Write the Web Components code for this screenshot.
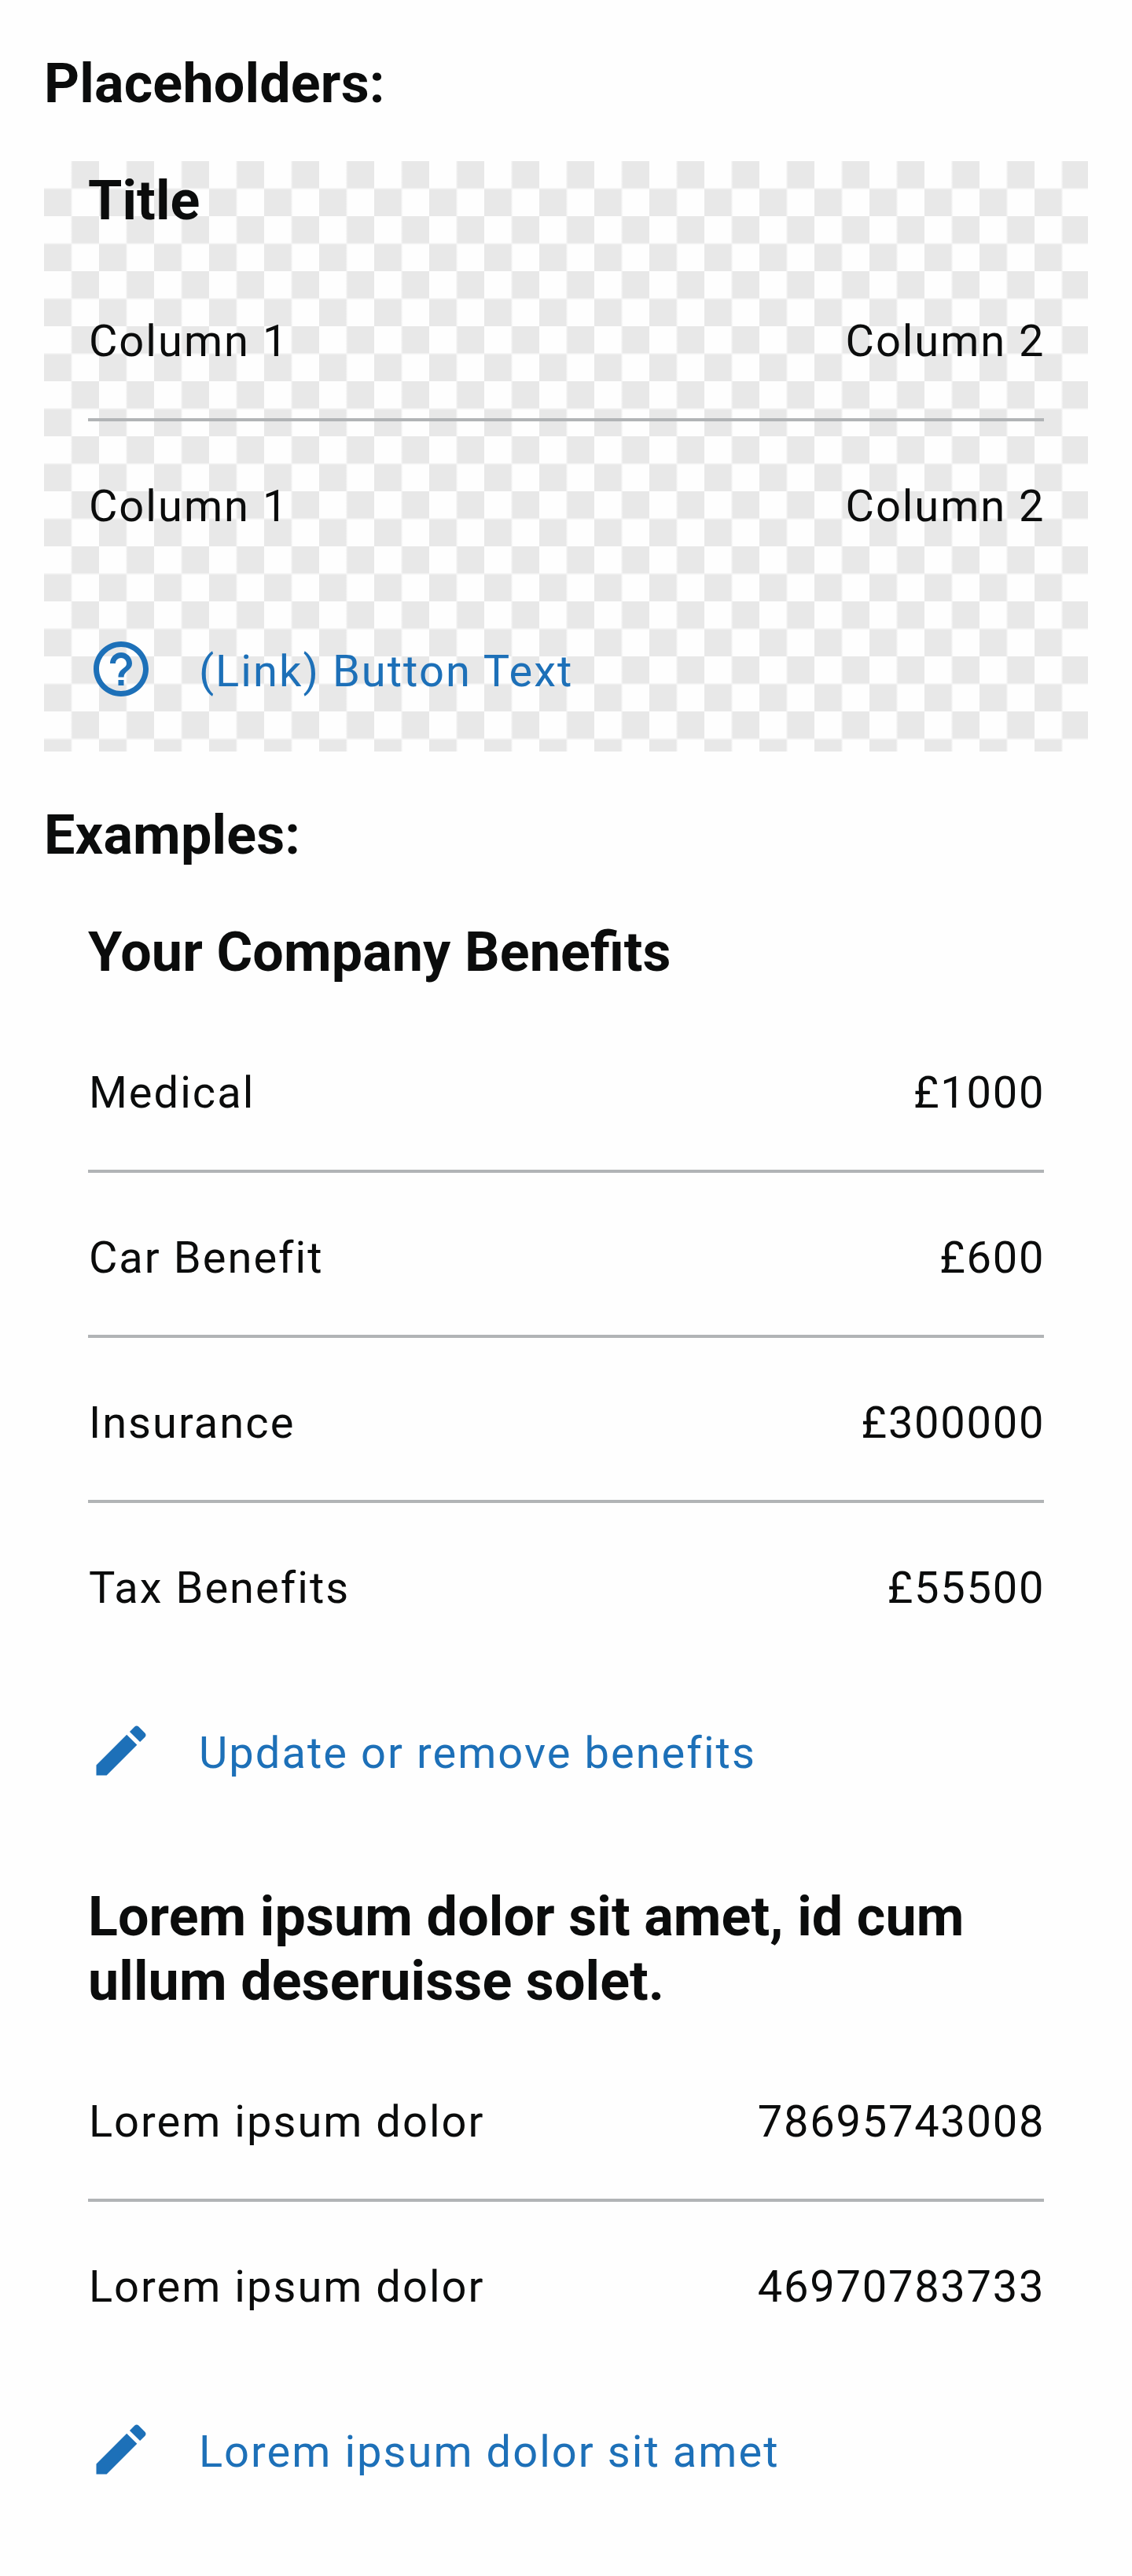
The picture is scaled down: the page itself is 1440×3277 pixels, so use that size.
<!DOCTYPE html>
<html lang="en">
<head>
<meta charset="utf-8">
<title>Benefit lists</title>
<style>
body { margin: 0; background: #fefefe; color: #0b0c0c; font-family: Roboto, "Liberation Sans", sans-serif; }
</style>
</head>
<body>
<spec-page>
  <section-heading>Placeholders:</section-heading>
  <summary-panel checkered>
    <span slot="title">Title</span>
    <summary-row><span>Column 1</span><span slot="value">Column 2</span></summary-row>
    <summary-row last><span>Column 1</span><span slot="value">Column 2</span></summary-row>
    <link-row icon="help">(Link) Button Text</link-row>
  </summary-panel>
  <section-heading>Examples:</section-heading>
  <summary-panel>
    <span slot="title">Your Company Benefits</span>
    <summary-row numeric><span>Medical</span><span slot="value">£1000</span></summary-row>
    <summary-row numeric><span>Car Benefit</span><span slot="value">£600</span></summary-row>
    <summary-row numeric><span>Insurance</span><span slot="value">£300000</span></summary-row>
    <summary-row numeric last><span>Tax Benefits</span><span slot="value">£55500</span></summary-row>
    <link-row icon="edit">Update or remove benefits</link-row>
  </summary-panel>
  <summary-panel spaced>
    <span slot="title">Lorem ipsum dolor sit amet, id cum ullum deseruisse solet.</span>
    <summary-row numeric><span>Lorem ipsum dolor</span><span slot="value">78695743008</span></summary-row>
    <summary-row numeric last><span>Lorem ipsum dolor</span><span slot="value">46970783733</span></summary-row>
    <link-row icon="edit">Lorem ipsum dolor sit amet</link-row>
  </summary-panel>
</spec-page>
<script>
function define(name, html) {
  customElements.define(name, class extends HTMLElement {
    constructor() {
      super();
      this.attachShadow({ mode: "open" }).innerHTML = html;
    }
  });
}

define("spec-page", `<style>
  :host { display: flex; flex-direction: column; box-sizing: border-box; width: 1440px; height: 3277px; padding: 0 56px 56px; }
</style><slot></slot>`);

define("section-heading", `<style>
  :host { display: block; padding: 65px 0 58px; }
  h1 { margin: 0; font-size: 70px; line-height: 82px; font-weight: 700; letter-spacing: 0.2px; }
</style><h1><slot></slot></h1>`);

define("summary-panel", `<style>
  :host { display: grid; }
  :host([spaced]) { margin-top: 56px; }
  .content, .check { grid-area: 1 / 1; min-width: 0; }
  .content { display: flex; flex-direction: column; padding: 9px 56px 0; z-index: 1; }
  h2 { margin: 0 0 30px; font-size: 70px; line-height: 82px; font-weight: 700; letter-spacing: 0.11px; font-feature-settings: "liga" 1; }
  /* Checkerboard: each layer paints alternate columns, the mask keeps alternate rows. */
  .check { display: none; }
  :host([checkered]) .check { display: block; }
  .odd {
    background: repeating-linear-gradient(90deg, transparent 0 33.5px, #e8e8e8 36.5px 70px);
    mask-image: repeating-linear-gradient(180deg, #000 0 33.5px, transparent 36.5px 70px);
  }
  .even {
    background: repeating-linear-gradient(90deg, #e8e8e8 0 33.5px, transparent 36.5px 70px);
    mask-image: repeating-linear-gradient(180deg, transparent 0 33.5px, #000 36.5px 70px);
  }
</style>
<div class="check odd"></div><div class="check even"></div>
<div class="content"><h2><slot name="title"></slot></h2><slot></slot></div>`);

define("summary-row", `<style>
  :host { display: flex; justify-content: space-between; box-sizing: border-box; height: 210px; padding-top: 75px;
    border-bottom: 4px solid #b1b4b6; font-size: 56px; line-height: 66px; letter-spacing: 2.03px; }
  :host([last]) { border-bottom-color: transparent; }
  ::slotted(span) { margin-left: 0.9px; }
  ::slotted([slot="value"]) { margin-right: -1.3px; letter-spacing: 1.93px; }
  :host([numeric]) ::slotted([slot="value"]) { letter-spacing: 1.76px; }
</style><slot></slot><slot name="value"></slot>`);

const icons = {
  help: "M11 18h2v-2h-2v2zm1-16C6.48 2 2 6.48 2 12s4.48 10 10 10 10-4.48 10-10S17.52 2 12 2zm0 18c-4.41 0-8-3.59-8-8s3.59-8 8-8 8 3.59 8 8-3.59 8-8 8zm0-14c-2.21 0-4 1.79-4 4h2c0-1.1.9-2 2-2s2 .9 2 2c0 2-3 1.75-3 5h2c0-2.25 3-2.5 3-5 0-2.21-1.79-4-4-4z",
  edit: "M3 17.25V21h3.75L17.81 9.94l-3.75-3.75L3 17.25zM20.71 7.04c.39-.39.39-1.02 0-1.41l-2.34-2.34c-.39-.39-1.02-.39-1.41 0l-1.83 1.83 3.75 3.75 1.83-1.83z"
};

customElements.define("link-row", class extends HTMLElement {
  constructor() {
    super();
    this.attachShadow({ mode: "open" }).innerHTML = `<style>
      :host { display: block; height: 210px; color: #1d70b8; }
      a { display: flex; gap: 56.9px; padding-top: 63px; font-size: 56px; line-height: 66px; letter-spacing: 2.05px; }
      svg { width: 84px; height: 84px; fill: currentColor; }
      span { padding-top: 12px; }
    </style><a><svg viewBox="0 0 24 24" aria-hidden="true"><path></path></svg><span><slot></slot></span></a>`;
  }
  connectedCallback() {
    this.shadowRoot.querySelector("path").setAttribute("d", icons[this.getAttribute("icon")]);
  }
});
</script>
</body>
</html>
